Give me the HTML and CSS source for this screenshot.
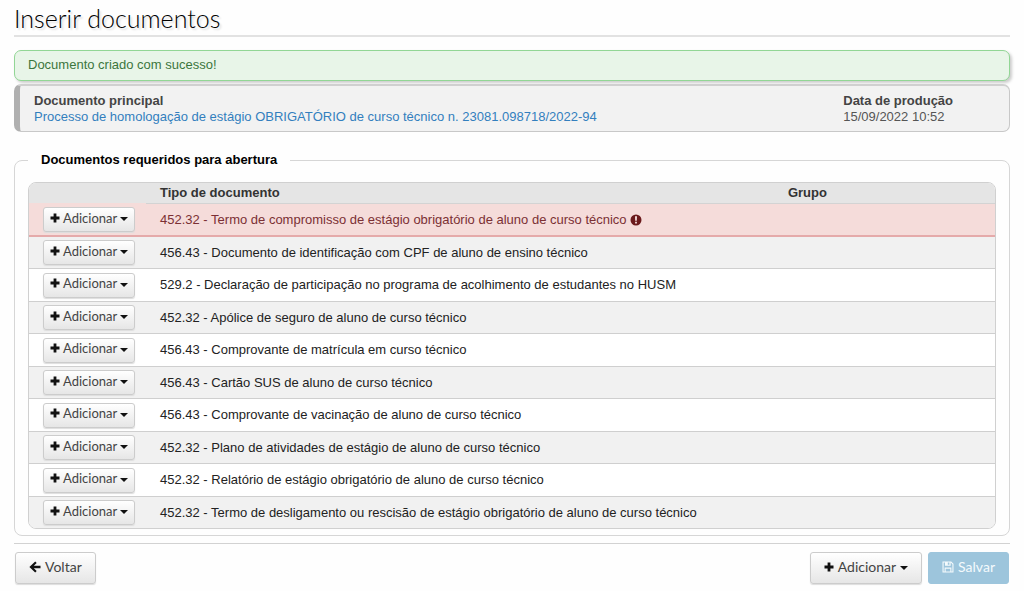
FILE: index.html
```html
<!DOCTYPE html>
<html lang="pt-BR">
<head>
<meta charset="utf-8">
<title>Inserir documentos</title>
<link rel="stylesheet" href="styles.css">
</head>
<body>
<svg class="sprite" aria-hidden="true">
  <symbol id="plus" viewBox="0 0 10 10"><path d="M3.6 0.5h2.8v3.1h3.1v2.8H6.4v3.1H3.6V6.4H0.5V3.6h3.1z"/></symbol>
  <symbol id="caret" viewBox="0 0 8 4"><path d="M0 0h8L4 4z"/></symbol>
  <symbol id="back" viewBox="0 0 12 12"><path d="M6.2 0.4l1.5 1.5-2.9 2.9h6.7v2.4H4.8l2.9 2.9-1.5 1.5L0.4 6z"/></symbol>
  <symbol id="alert" viewBox="0 0 12 12"><path fill-rule="evenodd" d="M6 0.5a5.5 5.5 0 1 0 0 11a5.5 5.5 0 0 0 0-11zM5 2.2h2l-0.2 4.6H5.2zM5.1 7.8h1.8v1.7H5.1z"/></symbol>
  <symbol id="save" viewBox="0 0 12 12"><path fill-rule="evenodd" d="M0.5 0.5h8.7l2.3 2.3v8.7h-11zM1.6 1.6v8.8h1V6.6h6.8v3.8h1V3.3L8.7 1.6v3.2H3V1.6zM5.8 1.5v2.3h1.6V1.5zM3.7 7.7v2.7h4.6V7.7z"/></symbol>
</svg>
<main class="page">
  <h1 class="title">Inserir documentos</h1>
  <div class="notice" role="status">Documento criado com sucesso!</div>
  <section class="summary">
    <div class="field">
      <strong>Documento principal</strong>
      <a href="#">Processo de homologação de estágio OBRIGATÓRIO de curso técnico n. 23081.098718/2022-94</a>
    </div>
    <div class="field date">
      <strong>Data de produção</strong>
      <span>15/09/2022 10:52</span>
    </div>
  </section>
  <fieldset class="group">
    <legend>Documentos requeridos para abertura</legend>
    <div class="frame">
      <table class="docs">
        <thead><tr><th class="action"></th><th class="type">Tipo de documento</th><th>Grupo</th></tr></thead>
        <tbody>
          <tr class="required"><td><button class="btn small" type="button"><svg class="plus"><use href="#plus"/></svg>Adicionar<svg class="caret"><use href="#caret"/></svg></button></td><td>452.32 - Termo de compromisso de estágio obrigatório de aluno de curso técnico <svg class="alert"><use href="#alert"/></svg></td><td></td></tr>
          <tr><td><button class="btn small" type="button"><svg class="plus"><use href="#plus"/></svg>Adicionar<svg class="caret"><use href="#caret"/></svg></button></td><td>456.43 - Documento de identificação com CPF de aluno de ensino técnico</td><td></td></tr>
          <tr><td><button class="btn small" type="button"><svg class="plus"><use href="#plus"/></svg>Adicionar<svg class="caret"><use href="#caret"/></svg></button></td><td>529.2 - Declaração de participação no programa de acolhimento de estudantes no HUSM</td><td></td></tr>
          <tr><td><button class="btn small" type="button"><svg class="plus"><use href="#plus"/></svg>Adicionar<svg class="caret"><use href="#caret"/></svg></button></td><td>452.32 - Apólice de seguro de aluno de curso técnico</td><td></td></tr>
          <tr><td><button class="btn small" type="button"><svg class="plus"><use href="#plus"/></svg>Adicionar<svg class="caret"><use href="#caret"/></svg></button></td><td>456.43 - Comprovante de matrícula em curso técnico</td><td></td></tr>
          <tr><td><button class="btn small" type="button"><svg class="plus"><use href="#plus"/></svg>Adicionar<svg class="caret"><use href="#caret"/></svg></button></td><td>456.43 - Cartão SUS de aluno de curso técnico</td><td></td></tr>
          <tr><td><button class="btn small" type="button"><svg class="plus"><use href="#plus"/></svg>Adicionar<svg class="caret"><use href="#caret"/></svg></button></td><td>456.43 - Comprovante de vacinação de aluno de curso técnico</td><td></td></tr>
          <tr><td><button class="btn small" type="button"><svg class="plus"><use href="#plus"/></svg>Adicionar<svg class="caret"><use href="#caret"/></svg></button></td><td>452.32 - Plano de atividades de estágio de aluno de curso técnico</td><td></td></tr>
          <tr><td><button class="btn small" type="button"><svg class="plus"><use href="#plus"/></svg>Adicionar<svg class="caret"><use href="#caret"/></svg></button></td><td>452.32 - Relatório de estágio obrigatório de aluno de curso técnico</td><td></td></tr>
          <tr><td><button class="btn small" type="button"><svg class="plus"><use href="#plus"/></svg>Adicionar<svg class="caret"><use href="#caret"/></svg></button></td><td>452.32 - Termo de desligamento ou rescisão de estágio obrigatório de aluno de curso técnico</td><td></td></tr>
        </tbody>
      </table>
    </div>
  </fieldset>
  <footer class="actions">
    <button class="btn" type="button"><svg class="back"><use href="#back"/></svg>Voltar</button>
    <div class="right">
      <button class="btn" type="button"><svg class="plus"><use href="#plus"/></svg>Adicionar<svg class="caret"><use href="#caret"/></svg></button>
      <button class="btn save" type="button" disabled><svg class="disk"><use href="#save"/></svg>Salvar</button>
    </div>
  </footer>
</main>
</body>
</html>
```
FILE: styles.css
```css
* { box-sizing: border-box; }
body {
  margin: 0;
  background: #fefefe;
  color: #222;
  font: 13px/16px "Liberation Sans", Arial, sans-serif;
}
.sprite { display: none; }
svg { fill: currentColor; flex: none; }
.page { padding: 2px 14px 6px; }
.title {
  margin: 0 0 13px;
  padding-bottom: 1px;
  border-bottom: 2px solid #e2e2e2;
  color: #000;
  font: 300 25px/32px Lato, sans-serif;
  text-shadow: 2px 2px 2px #ddd;
}
.notice {
  margin-bottom: 3px;
  padding: 6px 13px 7px;
  border: 1px solid #92d695;
  border-radius: 7px;
  background: #e8f5e8;
  box-shadow: 2px 2px 3px #ccc;
  color: #3c763d;
}
.summary {
  display: flex;
  justify-content: space-between;
  padding: 7px 0 6px 14px;
  border: 1px solid #c8c8c8;
  border-top: 2px solid #d0d0d0;
  border-left: 6px solid #b0b0b0;
  border-radius: 7px;
  background: #f2f2f2;
  color: #555;
}
.field { display: grid; }
.field strong { color: #444; }
.field a { color: #337fbe; text-decoration: none; }
.date { width: 17%; }
.group {
  min-width: 0;
  margin: 20px 0 7px;
  padding: 14px 13px 6px;
  border: 1px solid #d6d6d6;
  border-radius: 8px;
}
.group legend { padding: 0 13px; color: #000; font-weight: 700; }
.frame { overflow: hidden; border: 1px solid #d0d0d0; border-radius: 8px; }
.docs { width: 100%; border-collapse: separate; border-spacing: 0; table-layout: fixed; }
.docs th {
  height: 21px;
  padding: 0 14px;
  border-bottom: 1px solid #d3d3d3;
  background: #e5e5e5;
  color: #333;
  text-align: left;
}
.docs th.action { width: 117px; border-bottom-color: #f5dcda; }
.docs th.type { width: 65%; }
.docs td { height: 32px; padding: 0 14px; border-bottom: 1px solid #cfcfcf; background: #fff; }
.docs tr:nth-child(odd) td { height: 33px; }
.docs tr:nth-child(even) td { background: #f1f1f1; }
.docs .required td { border-bottom: 2px solid #e5aaaa; background: #f5dcda; color: #7b3034; }
.docs tr:last-child td { height: 31px; border-bottom: 0; }
.btn {
  display: inline-flex;
  align-items: center;
  gap: 4px;
  height: 32px;
  padding: 0 13px 3px;
  border: 1px solid #ccc;
  border-radius: 3px;
  background: linear-gradient(#fff, #e6e6e6);
  box-shadow: 0 1px 1px #ddd;
  color: #444;
  font: 14px/18px Lato, sans-serif;
}
.small { gap: 3px; height: 25px; padding: 0 6px 4px; font-size: 13px; }
.docs .btn { display: flex; }
.btn svg { color: #111; }
.plus { width: 10px; height: 10px; }
.caret { width: 8px; height: 4px; margin-top: 3px; }
.back { width: 12px; height: 12px; }
.alert { width: 12px; height: 12px; color: #6b1a1c; vertical-align: -2px; }
.disk { width: 12px; height: 12px; }
.actions { display: flex; justify-content: space-between; padding: 8px 1px; border-top: 1px solid #d2d2d2; }
.right { display: flex; gap: 6px; }
.btn.save, .btn.save svg { color: #f4fafc; }
.btn.save { border-color: #9dc5dc; background: #9dc5dc; box-shadow: none; }
```
